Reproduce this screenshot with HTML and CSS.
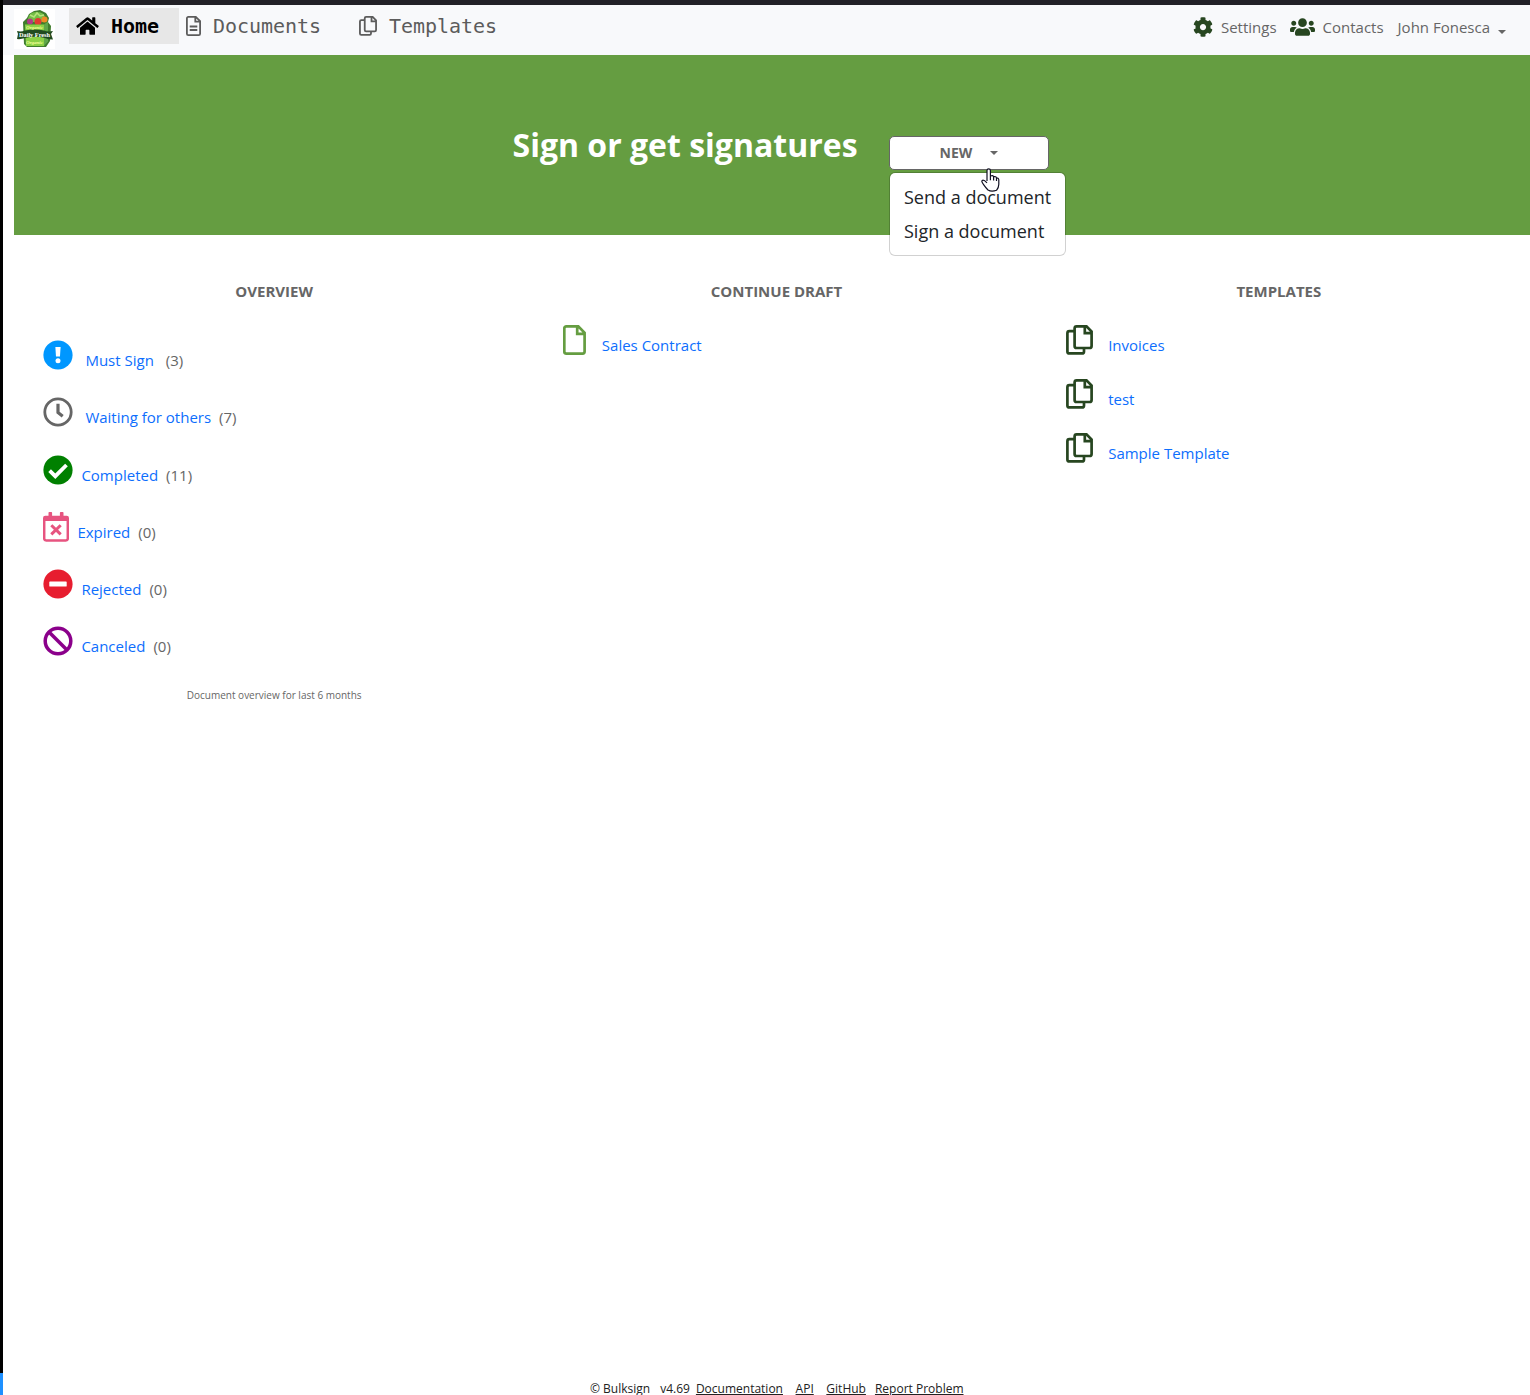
FILE: index.html
```html
<!DOCTYPE html>
<html lang="en">
<head>
<meta charset="utf-8">
<title>Bulksign</title>
<link rel="stylesheet" href="styles.css">
</head>
<body>
<svg class="defs" width="0" height="0">
  <symbol id="copy" viewBox="0 0 27 30">
    <path d="M8.600 6.200H3.400A2 2 0 0 0 1.400 8.200V26.400a2 2 0 0 0 2 2H16a2 2 0 0 0 2-2V23.500M10.600 1.400h9.900l5.100 5.100V21a2 2 0 0 1-2 2H10.600a2 2 0 0 1-2-2V3.400a2 2 0 0 1 2-2zM18.800 1.600v6.600h6.600" fill="none" stroke="currentColor" stroke-width="2.700"/>
  </symbol>
</svg>
<div class="window">
  <nav class="nav">
    <svg class="logo" viewBox="0 0 41 40">
      <rect width="41" height="40" fill="#fff"/>
      <path d="M9 13l4-4 2-4 5-3 6-1 6 3 3 5-1 4 3 4-1 15-4 6H13l-3-3z" fill="#3f7d2c"/>
      <path d="M14 10q1-7 8-7 8 0 9 5l-2 5H14z" fill="#73bf45"/>
      <path d="M16 6l4 2 3-4 3 3 4-1" stroke="#b5e27c" fill="none" stroke-width="1.500"/>
      <circle cx="16" cy="12.500" r="3" fill="#b03a86"/><circle cx="24" cy="12.500" r="3.500" fill="#e03a32"/><circle cx="30.500" cy="10.500" r="3" fill="#ef8b24"/>
      <path d="M11 15.500h19V37H12z" fill="#8bd045"/><path d="M30 15.500l4-3v20l-4 4.500z" fill="#5fa648"/>
      <path d="M3 22q4 1 8-.5 10-2 19 0 4 1.500 9 .5l-2 3 2 5.500q-4.500 0-8-1.500-10-2.500-20 0-4 1.500-8 1l1-5z" fill="#214b20"/>
      <text x="20.500" y="27.500" class="logo-name" textLength="31" lengthAdjust="spacingAndGlyphs">Daily Fresh</text>
      <text x="20.500" y="20.300" class="logo-sub">Organic</text>
      <text x="20.500" y="34.500" class="logo-sub">Organic</text>
    </svg>
    <a class="tab tab-home"><svg width="23" height="20" viewBox="0 0 576 512"><path fill="currentColor" d="M280.370 148.260L96 300.110V464a16 16 0 0 0 16 16l112.060-.29a16 16 0 0 0 15.920-16V368a16 16 0 0 1 16-16h64a16 16 0 0 1 16 16v95.640a16 16 0 0 0 16 16.050L464 480a16 16 0 0 0 16-16V300L295.670 148.260a12.190 12.190 0 0 0-15.300 0zM571.600 251.470L488 182.560V44.050a12 12 0 0 0-12-12h-56a12 12 0 0 0-12 12v72.610L318.470 43a48 48 0 0 0-61 0L4.340 251.470a12 12 0 0 0-1.600 16.900l25.500 31A12 12 0 0 0 45.150 301l235.220-193.740a12.190 12.190 0 0 1 15.300 0L530.900 301a12 12 0 0 0 16.900-1.600l25.500-31a12 12 0 0 0-1.700-16.930z"/></svg><span>Home</span></a>
    <a class="tab tab-documents"><svg width="15" height="20" viewBox="0 0 15 20"><g fill="none" stroke="currentColor" stroke-width="1.800"><path d="M2.300.9h7.500l4.300 4.300v12.500a1.400 1.400 0 0 1-1.400 1.400H2.300A1.400 1.400 0 0 1 .9 17.700V2.300A1.400 1.400 0 0 1 2.300.9zM9.300 1v4.700h4.700"/><path d="M3.700 10.500h7.600M3.700 14h7.600"/></g></svg><span>Documents</span></a>
    <a class="tab tab-templates"><svg width="18" height="20"><use href="#copy"/></svg><span>Templates</span></a>
    <div class="account">
      <a class="settings"><svg width="20" height="20" viewBox="0 0 512 512"><path fill="currentColor" d="M487.400 315.700l-42.600-24.600c4.300-23.200 4.300-47 0-70.200l42.600-24.600c4.900-2.800 7.100-8.600 5.500-14-11.100-35.600-30-67.800-54.700-94.600-3.800-4.100-10-5.100-14.800-2.300L380.800 110c-17.900-15.400-38.500-27.300-60.800-35.100V25.800c0-5.600-3.900-10.500-9.400-11.700-36.700-8.200-74.300-7.800-109.200 0-5.500 1.200-9.400 6.100-9.400 11.700V75c-22.200 7.900-42.800 19.800-60.800 35.100L88.700 85.500c-4.900-2.800-11-1.900-14.800 2.300-24.700 26.700-43.600 58.900-54.700 94.600-1.700 5.400.6 11.200 5.500 14L67.300 221c-4.300 23.200-4.300 47 0 70.200l-42.600 24.600c-4.900 2.800-7.100 8.600-5.500 14 11.100 35.600 30 67.800 54.700 94.600 3.800 4.100 10 5.100 14.800 2.300l42.600-24.600c17.900 15.400 38.500 27.300 60.800 35.100v49.200c0 5.600 3.900 10.500 9.400 11.700 36.700 8.200 74.300 7.800 109.200 0 5.500-1.200 9.400-6.100 9.400-11.700v-49.200c22.200-7.900 42.800-19.800 60.800-35.100l42.600 24.600c4.900 2.800 11 1.900 14.800-2.300 24.700-26.700 43.600-58.900 54.700-94.600 1.500-5.500-.7-11.300-5.600-14.100zM256 336c-44.100 0-80-35.900-80-80s35.900-80 80-80 80 35.900 80 80-35.900 80-80 80z"/></svg><span>Settings</span></a>
      <a class="contacts"><svg width="25" height="20" viewBox="0 0 640 512"><path fill="currentColor" d="M96 224c35.300 0 64-28.700 64-64s-28.700-64-64-64-64 28.700-64 64 28.700 64 64 64zm448 0c35.300 0 64-28.700 64-64s-28.700-64-64-64-64 28.700-64 64 28.700 64 64 64zm32 32h-64c-17.600 0-33.500 7.100-45.100 18.600 40.300 22.100 68.900 62 75.100 109.400h66c17.700 0 32-14.300 32-32v-32c0-35.300-28.700-64-64-64zm-256 0c61.900 0 112-50.100 112-112S381.900 32 320 32 208 82.100 208 144s50.100 112 112 112zm76.800 32h-8.300c-20.800 10-43.900 16-68.500 16s-47.600-6-68.500-16h-8.300C179.600 288 128 339.600 128 403.200V432c0 26.500 21.500 48 48 48h288c26.500 0 48-21.500 48-48v-28.800c0-63.600-51.600-115.200-115.200-115.200zm-223.700-13.400C161.500 263.100 145.600 256 128 256H64c-35.300 0-64 28.700-64 64v32c0 17.700 14.300 32 32 32h65.900c6.300-47.400 34.900-87.300 75.200-109.400z"/></svg><span>Contacts</span></a>
      <a class="user"><span>John Fonesca</span><i class="caret"></i></a>
    </div>
  </nav>

  <section class="hero">
    <h1>Sign or get signatures</h1>
    <div class="new">
      <button class="new-button"><span>NEW</span><i class="caret"></i></button>
      <div class="menu"><a>Send a document</a><a>Sign a document</a></div>
      <svg class="pointer" width="19" height="24" viewBox="0 0 19 24"><path d="M6 13V2.600a1.700 1.700 0 0 1 3.400 0V8q2.600-1.100 3.200.7 2.500-.6 2.900 1.200 2.300-.2 2.300 2.100v4.200q0 3.200-2.300 6.100-5 1.800-8.500-.3Q4.600 19.500 2.600 16.600 0 13.200 1.300 12.400 2.800 11.500 6 14.800M9.400 8v4.300M12.600 8.700v3.800M15.500 9.900v3" fill="#fff" stroke="#111122" stroke-width="1.200"/></svg>
    </div>
  </section>

  <main class="columns">
    <section class="overview">
      <h2>OVERVIEW</h2>
      <ul>
        <li class="wide far"><svg width="30" height="30" viewBox="0 0 30 30"><circle cx="15" cy="15" r="14.600" fill="#0097ff"/><path d="M12.400 7h5.200l-.6 9.500h-4z" fill="#fff"/><circle cx="15" cy="20.700" r="2.500" fill="#fff"/></svg><a>Must Sign</a><span>(3)</span></li>
        <li class="wide"><svg width="30" height="30" viewBox="0 0 30 30"><circle cx="15" cy="15" r="13.200" fill="none" stroke="#666" stroke-width="2.800"/><path d="M15 6.700V15.500l4.700 3.700" fill="none" stroke="#666" stroke-width="3.200"/></svg><a>Waiting for others</a><span>(7)</span></li>
        <li><svg width="30" height="30" viewBox="0 0 30 30"><circle cx="15" cy="15" r="14.600" fill="#008000"/><path d="M6.600 15.600l5.700 5.600L23.500 10" fill="none" stroke="#fff" stroke-width="3.800" stroke-linecap="butt"/></svg><a>Completed</a><span>(11)</span></li>
        <li><svg width="26" height="30" viewBox="0 0 26 30"><path d="M1.200 6v20.500q0 2 2 2h19.600q2 0 2-2V6" fill="none" stroke="#e75480" stroke-width="2.500"/><path d="M0 9V6q0-2.300 2.300-2.300H5.500V.8q0-.8.8-.8h2q.8 0 .8.800v2.900h7.800V.8q0-.8.8-.8h2q.8 0 .8.800v2.900h3.200Q26 3.700 26 6v3z" fill="#e75480"/><path d="M8.300 13.200l9.400 9.200m0-9.200l-9.400 9.200" stroke="#e75480" stroke-width="3"/></svg><a>Expired</a><span>(0)</span></li>
        <li><svg width="30" height="30" viewBox="0 0 30 30"><circle cx="15" cy="15" r="14.600" fill="#e71d2f"/><rect x="6.300" y="12.400" width="17.400" height="5.200" rx=".7" fill="#fff"/></svg><a>Rejected</a><span>(0)</span></li>
        <li><svg width="30" height="30" viewBox="0 0 30 30"><g fill="none" stroke="#8b008b" stroke-width="3.500"><circle cx="15" cy="15" r="12.800"/><path d="M6 6l18 18"/></g></svg><a>Canceled</a><span>(0)</span></li>
      </ul>
      <p>Document overview for last 6 months</p>
    </section>
    <section class="list drafts">
      <h2>CONTINUE DRAFT</h2>
      <ul><li><svg width="23" height="30" viewBox="0 0 23 30"><path d="M3.300 1.400h12l6.300 6.300V26.600a2 2 0 0 1-2 2H3.300a2 2 0 0 1-2-2V3.400a2 2 0 0 1 2-2zM14.200 1.600v7.200h7.200" fill="none" stroke="#659d41" stroke-width="2.700"/></svg><a>Sales Contract</a></li></ul>
    </section>
    <section class="list templates">
      <h2>TEMPLATES</h2>
      <ul>
        <li><svg width="27" height="30"><use href="#copy"/></svg><a>Invoices</a></li>
        <li><svg width="27" height="30"><use href="#copy"/></svg><a>test</a></li>
        <li><svg width="27" height="30"><use href="#copy"/></svg><a>Sample Template</a></li>
      </ul>
    </section>
  </main>

  <footer><span>© Bulksign</span><span>v4.69</span><a>Documentation</a><a>API</a><a>GitHub</a><a>Report Problem</a></footer>
</div>
</body>
</html>
```

FILE: styles.css
```css
* { box-sizing: border-box; }
body { margin: 0; height: 1395px; overflow: hidden; background: linear-gradient(#000 1373px, #1e90ff 1373px); font: 400 15px/20px "Open Sans", sans-serif; color: #666; }
h1, h2, p, ul { margin: 0; padding: 0; list-style: none; }
svg { display: block; flex: none; }
.defs { position: absolute; }
.window { margin-left: 3px; height: 1395px; background: #fff; border-top: 5px solid #222127; display: flex; flex-direction: column; }
.caret { border: 4px solid transparent; border-top-color: currentColor; border-bottom: 0; }

.nav { height: 50px; background: #f8f9fb; display: flex; align-items: flex-start; padding: 3px 24px 0 11px; flex: none; }
.logo { width: 41px; height: 40px; margin-top: 1px; }
.logo-name { font: bold 6.500px "Liberation Serif", serif; fill: #fff; text-anchor: middle; }
.logo-sub { font: italic bold 5px "Liberation Serif", serif; fill: #f4ff9a; text-anchor: middle; }
.tab { display: flex; align-items: center; height: 36px; font: 20px/36px "DejaVu Sans Mono", monospace; color: #5c5c5c; letter-spacing: -.04px; }
.tab-home { width: 110px; margin-left: 14px; padding-left: 7px; gap: 12px; background: #e7e7e7; color: #000; font-weight: bold; }
.tab-documents { margin-left: 7px; gap: 12px; width: 173px; }
.tab-templates { gap: 12px; }
.account { display: flex; margin-left: auto; height: 37px; font-size: 15px; }
.account a { display: flex; align-items: center; }
.account svg { color: #274620; margin-left: -1px; }
.settings { gap: 8px; margin-right: 14px; }
.contacts { gap: 8px; margin-right: 14px; }
.account span { padding-top: 1px; }
.user .caret { margin: 10px 0 0 8px; }

.hero { height: 180px; margin-left: 11px; background: #659d41; display: flex; padding-left: 498.500px; flex: none; }
.hero h1 { font-size: 32px; line-height: 44px; font-weight: 700; color: #fff; margin-top: 68px; width: 376.500px; white-space: nowrap; }
.new { position: relative; margin-top: 81px; height: 34px; }
.new-button { width: 160px; height: 34px; border: 1px solid #666; border-radius: 5px; background: #fff; color: #666; font: 700 14px/18px "Open Sans", sans-serif; display: flex; align-items: center; justify-content: center; gap: 18px; padding: 0; }
.menu { position: absolute; z-index: 1; top: 36px; left: 0; width: 177px; height: 84px; padding: 7px 14px; background: #fff; background-clip: padding-box; border: 1px solid rgba(0, 0, 0, .18); border-radius: 6px; color: #212529; font-size: 18px; line-height: 34px; }
.menu a { display: block; white-space: nowrap; }
.pointer { position: absolute; z-index: 2; left: 92px; top: 32px; }

.columns { display: grid; grid-template-columns: repeat(3, 1fr); margin-left: 20px; padding-top: 46px; }
.columns h2 { font-size: 15px; line-height: 20px; font-weight: 700; text-align: center; }
.columns li { display: flex; }
.columns li a { color: #0d6efd; }
.overview ul { padding: 39px 0 0 20px; }
.overview li { height: 57.200px; gap: 8px; }
.overview li:nth-child(3) { padding-top: .3px; }
.overview li svg { margin-right: .400px; }
.overview li.wide a { margin-left: 4px; }
.overview li.far a { margin-right: 4px; }
.overview li a, .overview li span { padding-top: 10px; }
.overview p { font-size: 10px; line-height: 14px; text-align: center; margin-top: 5px; }
.list ul { padding: 24px 0 0 38.500px; }
.list li { height: 54px; gap: 15px; }
.list li a { padding-top: 10px; }
.drafts li { gap: 15.500px; }
.drafts svg { margin-left: -.5px; }
.templates svg { color: #274620; }

footer { margin-top: auto; height: 16px; padding-left: 587px; display: flex; font-size: 12px; line-height: 20px; color: #222; white-space: nowrap; }
footer span:first-child { margin-right: 10px; }
footer span + span { margin-right: 6px; }
footer a { text-decoration: underline; margin-right: 12.600px; }
footer a:nth-last-child(2) { margin-right: 9px; }
```
